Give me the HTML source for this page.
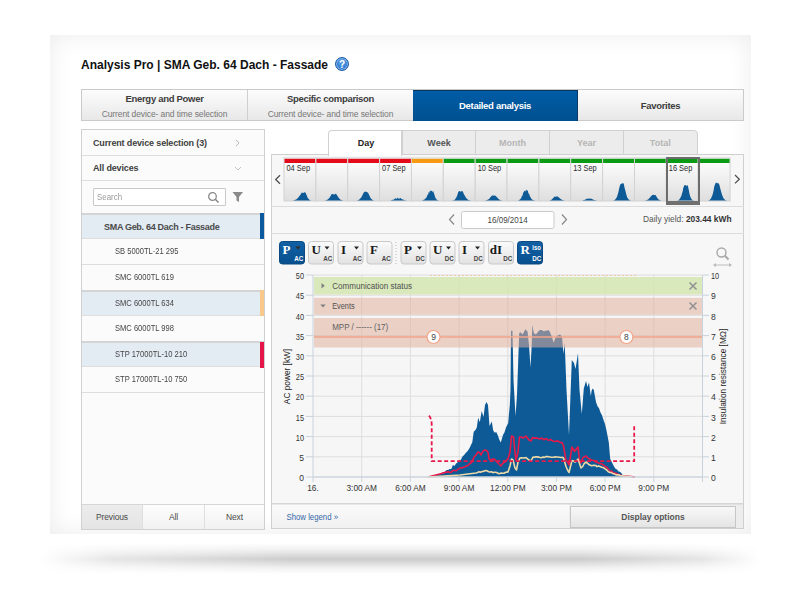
<!DOCTYPE html>
<html><head><meta charset="utf-8">
<style>
*{box-sizing:border-box;margin:0;padding:0}
html,body{width:800px;height:600px;overflow:hidden;background:#fff;font-family:"Liberation Sans",sans-serif;color:#444}
.a{position:absolute}
#shadow{left:40px;top:543px;width:720px;height:31px;background:linear-gradient(to bottom,rgba(0,0,0,0) 0%,rgba(0,0,0,0.06) 22%,rgba(0,0,0,0.2) 52%,rgba(0,0,0,0.06) 80%,rgba(0,0,0,0) 100%);-webkit-mask-image:linear-gradient(to right,transparent 0%,rgba(0,0,0,.5) 10%,#000 35%,#000 75%,rgba(0,0,0,.5) 92%,transparent 100%)}
#panel{left:50px;top:35px;width:701px;height:499px;background:#fff;box-shadow:inset 0 0 24px rgba(0,0,0,0.08)}
#title{left:81px;top:57px;font-size:12px;font-weight:bold;color:#111;white-space:nowrap}
#help{left:335px;top:57px;width:14px;height:14px;border-radius:50%;background:radial-gradient(circle at 50% 35%,#5aa0e8,#1e68c0);border:1px solid #1a5aa8;color:#fff;font-size:10px;font-weight:bold;text-align:center;line-height:14px;box-shadow:inset 0 0 0 1px rgba(190,220,255,0.6)}
#tabs{left:81px;top:89px;width:663px;height:32px;border:1px solid #cacaca;background:linear-gradient(#fcfcfc,#e8e8e8)}
.tab{position:absolute;top:0;height:30px;text-align:center;white-space:nowrap}
.tab b{display:block;font-size:9.5px;color:#3c3c3c;margin-top:3px;letter-spacing:-0.3px}
.tab span{display:block;font-size:8.5px;color:#777;margin-top:5px;letter-spacing:-0.1px}
.tab.sel{background:linear-gradient(#005ca6,#00508f)}
.tab.sel b{color:#fff;margin-top:9.5px}
#left{left:81px;top:129px;width:184px;height:401px;border:1px solid #d0d0d0;background:#fbfbfb}
.row{position:absolute;left:0;width:182px;border-bottom:1px solid #dedede;white-space:nowrap}
#right{left:271px;top:154px;width:473px;height:375px;border:1px solid #cfcfcf;background:#f7f7f7}
.lt{position:absolute;white-space:nowrap;color:#404040}
.chev{position:absolute;font-size:12px;color:#c4c4c4}
.dv{position:absolute;left:33px;top:7px;font-size:9px;color:#454545;white-space:nowrap;transform:scaleX(0.84);transform-origin:0 0}
.bar{position:absolute;right:0;top:0;width:4px;height:100%;display:block}
.btn{top:0;height:24px;line-height:24px;text-align:center;font-size:8.5px;color:#4a4a4a;letter-spacing:-0.15px}
.ptab{top:130px;height:25px;border:1px solid #d0d0d0;background:#ececec;text-align:center;font-size:9px;font-weight:bold;line-height:24px}
</style></head><body>
<div id="shadow" class="a"></div>
<div id="panel" class="a"></div>
<div id="title" class="a" style="top:58px">Analysis Pro | SMA Geb. 64 Dach - Fassade</div>
<div id="help" class="a">?</div>

<div id="tabs" class="a">
  <div class="tab" style="left:0;width:166px;border-right:1px solid #cfcfcf"><b>Energy and Power</b><span>Current device- and time selection</span></div>
  <div class="tab" style="left:166px;width:166px;border-right:1px solid #cfcfcf"><b>Specific comparison</b><span>Current device- and time selection</span></div>
  <div class="tab sel" style="left:331px;width:165px;top:-0.5px;height:31px;border-top:1px solid #08335e;border-right:1px solid #0a3a68"><b>Detailed analysis</b></div>
  <div class="tab" style="left:496px;width:165px"><b style="margin-top:10px">Favorites</b></div>
</div>

<div id="left" class="a">
  <div class="row" style="top:0;height:26px"><b class="lt" style="left:11px;top:8px;font-size:9px;letter-spacing:-0.15px">Current device selection (3)</b><svg class="a" style="left:153px;top:9px" width="5" height="8"><path d="M1 0.8 L4 4 L1 7.2" fill="none" stroke="#b8b8b8" stroke-width="1"/></svg></div>
  <div class="row" style="top:25px;height:26px"><b class="lt" style="left:11px;top:8px;font-size:9px;letter-spacing:-0.15px">All devices</b><svg class="a" style="left:152px;top:11px" width="8" height="5"><path d="M1 1 L4 4 L7 1" fill="none" stroke="#c4c4c4" stroke-width="1"/></svg></div>
  <div class="row" style="top:51px;height:33px;border-bottom:none"></div>
  <div class="a" style="left:11px;top:58px;width:133px;height:18px;border:1px solid #c8c8c8;background:#fff;border-radius:1px"><span class="lt" style="left:3px;top:3px;font-size:9px;color:#9a9a9a;transform:scaleX(0.88);transform-origin:0 0">Search</span>
    <svg class="a" style="left:113px;top:2px" width="13" height="13"><circle cx="5.5" cy="5.5" r="3.8" fill="none" stroke="#888" stroke-width="1.3"/><path d="M8.3 8.3 L11.5 11.5" stroke="#888" stroke-width="1.6"/></svg></div>
  <svg class="a" style="left:150px;top:61px" width="12" height="12"><path d="M0.5 1 L11 1 L7 6 L7 11 L4.5 9.5 L4.5 6 Z" fill="#8a8a8a"/></svg>
  <div class="row sel" style="top:83px;height:26px;border-top:2px solid #d4d4d4;background:#e3ebf3"><b class="lt" style="left:22px;top:7px;font-size:9px;letter-spacing:-0.3px;color:#4a4a4a">SMA Geb. 64 Dach - Fassade</b><i class="bar" style="background:#0b5aa0;top:-2px;height:26px"></i></div>
  <div class="row" style="top:109px;height:26px"><span class="dv">SB 5000TL-21 295</span></div>
  <div class="row" style="top:135px;height:26px"><span class="dv">SMC 6000TL 619</span></div>
  <div class="row sel" style="top:160px;height:26px;border-top:2px solid #d4d4d4;background:#e3ebf3"><span class="dv" style="top:6px">SMC 6000TL 634</span><i class="bar" style="background:#f9c98c;top:-2px;height:26px"></i></div>
  <div class="row" style="top:186px;height:26px"><span class="dv">SMC 6000TL 998</span></div>
  <div class="row sel" style="top:211px;height:26px;border-top:2px solid #d4d4d4;background:#e3ebf3"><span class="dv" style="top:6px">STP 17000TL-10 210</span><i class="bar" style="background:#e5174a;top:-1px;height:26px"></i></div>
  <div class="row" style="top:237px;height:26px"><span class="dv">STP 17000TL-10 750</span></div>
  <div class="a" style="left:0;top:374px;width:182px;height:25px;border-top:1px solid #d6d6d6;background:#f9f9f9">
    <div class="a btn" style="left:0;width:60px;background:linear-gradient(#ececec,#e4e4e4)">Previous</div>
    <div class="a btn" style="left:60px;width:62px;border-left:1px solid #dedede;background:linear-gradient(#fdfdfd,#f1f1f1)">All</div>
    <div class="a btn" style="left:122px;width:60px;border-left:1px solid #dedede;background:linear-gradient(#fdfdfd,#f1f1f1)">Next</div>
  </div>
</div>
<div id="right" class="a"></div>
<div class="a ptab" style="left:328px;width:74px;background:#fff;border-radius:4px 0 0 0;color:#222;border-bottom:none;height:26px;padding-left:2px">Day</div>
<div class="a ptab" style="left:402px;width:74px;color:#555">Week</div>
<div class="a ptab" style="left:475px;width:75px;color:#b5b5b5">Month</div>
<div class="a ptab" style="left:549px;width:75px;color:#b5b5b5">Year</div>
<div class="a ptab" style="left:623px;width:74.5px;color:#b5b5b5;border-radius:0 4px 0 0">Total</div>


<svg class="a" style="left:0;top:0" width="800" height="600" viewBox="0 0 800 600">
<defs><linearGradient id="cg" x1="0" y1="0" x2="0" y2="1"><stop offset="0" stop-color="#ffffff"/><stop offset="1" stop-color="#dedede"/></linearGradient></defs>
<rect x="284.0" y="158" width="31.9" height="43" fill="url(#cg)" stroke="#d2d2d2" stroke-width="1"/>
<rect x="284.5" y="158.8" width="30.9" height="4.2" fill="#e30a1a"/>
<rect x="315.9" y="158" width="31.9" height="43" fill="url(#cg)" stroke="#d2d2d2" stroke-width="1"/>
<rect x="316.4" y="158.8" width="30.9" height="4.2" fill="#e30a1a"/>
<rect x="347.7" y="158" width="31.9" height="43" fill="url(#cg)" stroke="#d2d2d2" stroke-width="1"/>
<rect x="348.2" y="158.8" width="30.9" height="4.2" fill="#e30a1a"/>
<rect x="379.6" y="158" width="31.9" height="43" fill="url(#cg)" stroke="#d2d2d2" stroke-width="1"/>
<rect x="380.1" y="158.8" width="30.9" height="4.2" fill="#e30a1a"/>
<rect x="411.4" y="158" width="31.9" height="43" fill="url(#cg)" stroke="#d2d2d2" stroke-width="1"/>
<rect x="411.9" y="158.8" width="30.9" height="4.2" fill="#f59a12"/>
<rect x="443.3" y="158" width="31.9" height="43" fill="url(#cg)" stroke="#d2d2d2" stroke-width="1"/>
<rect x="443.8" y="158.8" width="30.9" height="4.2" fill="#0a9a14"/>
<rect x="475.2" y="158" width="31.9" height="43" fill="url(#cg)" stroke="#d2d2d2" stroke-width="1"/>
<rect x="475.7" y="158.8" width="30.9" height="4.2" fill="#0a9a14"/>
<rect x="507.0" y="158" width="31.9" height="43" fill="url(#cg)" stroke="#d2d2d2" stroke-width="1"/>
<rect x="507.5" y="158.8" width="30.9" height="4.2" fill="#0a9a14"/>
<rect x="538.9" y="158" width="31.9" height="43" fill="url(#cg)" stroke="#d2d2d2" stroke-width="1"/>
<rect x="539.4" y="158.8" width="30.9" height="4.2" fill="#0a9a14"/>
<rect x="570.7" y="158" width="31.9" height="43" fill="url(#cg)" stroke="#d2d2d2" stroke-width="1"/>
<rect x="571.2" y="158.8" width="30.9" height="4.2" fill="#0a9a14"/>
<rect x="602.6" y="158" width="31.9" height="43" fill="url(#cg)" stroke="#d2d2d2" stroke-width="1"/>
<rect x="603.1" y="158.8" width="30.9" height="4.2" fill="#0a9a14"/>
<rect x="634.5" y="158" width="31.9" height="43" fill="url(#cg)" stroke="#d2d2d2" stroke-width="1"/>
<rect x="635.0" y="158.8" width="30.9" height="4.2" fill="#0a9a14"/>
<rect x="666.3" y="158" width="31.9" height="43" fill="url(#cg)" stroke="#d2d2d2" stroke-width="1"/>
<rect x="666.8" y="158.8" width="30.9" height="4.2" fill="#0a9a14"/>
<rect x="698.2" y="158" width="31.9" height="43" fill="url(#cg)" stroke="#d2d2d2" stroke-width="1"/>
<rect x="698.7" y="158.8" width="30.9" height="4.2" fill="#0a9a14"/>
<path d="M292.0,200.5 L293.0,200.4 L293.7,200.3 L294.4,200.1 L295.1,199.9 L295.8,199.6 L296.5,199.2 L297.2,198.7 L297.8,198.0 L298.5,197.3 L299.2,196.2 L299.9,195.5 L300.6,194.4 L301.3,193.2 L302.0,192.3 L302.7,193.0 L303.4,192.9 L304.1,192.5 L304.8,192.2 L305.5,192.5 L306.2,194.2 L306.8,195.5 L307.5,197.4 L308.2,198.4 L308.9,199.3 L309.6,199.9 L310.3,200.2 L311.0,200.4 L312.0,200.5 Z" fill="#0d5a96"/>
<text x="286.5" y="171" font-size="8.3" fill="#2a2a2a" font-family="Liberation Sans" textLength="23.5" lengthAdjust="spacingAndGlyphs">04 Sep</text>
<path d="M324.0,200.5 L325.0,200.4 L325.7,200.3 L326.4,200.1 L327.1,199.8 L327.8,199.4 L328.5,198.8 L329.2,198.2 L329.8,197.3 L330.5,196.2 L331.2,194.8 L331.9,194.0 L332.6,194.1 L333.3,194.2 L334.0,194.5 L334.7,194.4 L335.4,193.7 L336.1,193.8 L336.8,195.1 L337.5,196.0 L338.2,197.1 L338.8,197.9 L339.5,198.8 L340.2,199.4 L340.9,199.8 L341.6,200.1 L342.3,200.3 L343.0,200.4 L344.0,200.5 Z" fill="#0d5a96"/>
<path d="M356.0,200.5 L357.0,200.4 L357.7,200.2 L358.3,200.1 L359.0,199.7 L359.6,199.2 L360.3,198.6 L360.9,197.7 L361.6,196.9 L362.2,195.5 L362.9,194.3 L363.5,193.0 L364.2,192.0 L364.8,191.7 L365.5,191.5 L366.2,192.0 L366.8,191.8 L367.5,192.4 L368.1,192.7 L368.8,194.2 L369.4,195.5 L370.1,196.9 L370.7,198.2 L371.4,199.0 L372.0,199.5 L372.7,200.0 L373.3,200.2 L374.0,200.4 L375.0,200.5 Z" fill="#0d5a96"/>
<path d="M388.0,200.5 L389.0,200.5 L389.7,200.4 L390.5,200.4 L391.2,200.3 L391.9,200.1 L392.7,199.8 L393.4,199.8 L394.1,199.6 L394.8,198.5 L395.6,198.3 L396.3,199.0 L397.0,198.4 L397.8,197.5 L398.5,198.5 L399.2,199.0 L400.0,198.1 L400.7,197.9 L401.4,199.1 L402.2,199.6 L402.9,199.3 L403.6,199.7 L404.3,200.2 L405.1,200.2 L405.8,200.2 L406.5,200.4 L407.3,200.5 L408.0,200.5 L409.0,200.5 Z" fill="#0d5a96"/>
<text x="382.1" y="171" font-size="8.3" fill="#2a2a2a" font-family="Liberation Sans" textLength="23.5" lengthAdjust="spacingAndGlyphs">07 Sep</text>
<path d="M421.0,200.5 L422.0,200.4 L422.6,200.2 L423.2,200.0 L423.8,199.8 L424.5,199.4 L425.1,199.1 L425.7,198.1 L426.3,197.9 L426.9,196.2 L427.5,195.1 L428.2,194.2 L428.8,192.1 L429.4,192.8 L430.0,190.3 L430.6,191.3 L431.2,190.7 L431.8,190.7 L432.5,192.3 L433.1,190.4 L433.7,192.8 L434.3,194.2 L434.9,196.3 L435.5,198.1 L436.2,198.9 L436.8,199.8 L437.4,200.1 L438.0,200.3 L439.0,200.5 Z" fill="#0d5a96"/>
<path d="M452.0,200.5 L453.0,200.3 L453.7,200.2 L454.3,199.9 L455.0,199.4 L455.6,198.6 L456.3,197.6 L456.9,196.3 L457.6,194.2 L458.2,192.3 L458.9,191.2 L459.5,191.0 L460.2,191.5 L460.8,191.5 L461.5,191.2 L462.2,191.3 L462.8,191.3 L463.5,193.2 L464.1,194.7 L464.8,195.4 L465.4,196.8 L466.1,197.9 L466.7,198.6 L467.4,199.3 L468.0,199.7 L468.7,200.0 L469.3,200.2 L470.0,200.3 L471.0,200.5 Z" fill="#0d5a96"/>
<path d="M484.0,200.5 L485.0,200.4 L485.7,200.3 L486.3,200.2 L487.0,200.0 L487.6,199.8 L488.3,199.4 L488.9,199.0 L489.6,198.4 L490.2,197.6 L490.9,196.7 L491.5,196.0 L492.2,195.4 L492.8,195.4 L493.5,195.5 L494.2,195.8 L494.8,195.6 L495.5,195.7 L496.1,196.4 L496.8,197.1 L497.4,197.8 L498.1,198.6 L498.7,199.1 L499.4,199.6 L500.0,200.0 L500.7,200.2 L501.3,200.3 L502.0,200.4 L503.0,200.5 Z" fill="#0d5a96"/>
<text x="477.7" y="171" font-size="8.3" fill="#2a2a2a" font-family="Liberation Sans" textLength="23.5" lengthAdjust="spacingAndGlyphs">10 Sep</text>
<path d="M517.0,200.5 L518.0,200.4 L518.6,200.2 L519.2,200.0 L519.8,199.6 L520.5,198.9 L521.1,198.3 L521.7,196.6 L522.3,195.9 L522.9,194.0 L523.5,192.3 L524.2,191.3 L524.8,190.5 L525.4,191.7 L526.0,189.6 L526.6,190.5 L527.2,190.5 L527.8,190.6 L528.5,193.8 L529.1,193.5 L529.7,196.0 L530.3,196.8 L530.9,197.9 L531.5,199.1 L532.2,199.5 L532.8,199.9 L533.4,200.1 L534.0,200.3 L535.0,200.5 Z" fill="#0d5a96"/>
<path d="M548.0,200.5 L549.0,200.4 L549.6,200.4 L550.2,200.2 L550.8,200.0 L551.5,199.7 L552.1,199.2 L552.7,198.6 L553.3,197.9 L553.9,197.3 L554.5,196.6 L555.2,196.8 L555.8,196.8 L556.4,196.4 L557.0,196.5 L557.6,196.6 L558.2,196.7 L558.8,197.4 L559.5,197.9 L560.1,198.4 L560.7,199.1 L561.3,199.4 L561.9,199.8 L562.5,200.0 L563.2,200.2 L563.8,200.3 L564.4,200.4 L565.0,200.4 L566.0,200.5 Z" fill="#0d5a96"/>
<path d="M580.0,200.5 L581.0,200.5 L581.7,200.4 L582.3,200.4 L583.0,200.3 L583.6,200.1 L584.3,200.0 L584.9,199.7 L585.6,199.4 L586.2,199.1 L586.9,198.8 L587.5,198.7 L588.2,198.6 L588.8,198.7 L589.5,198.7 L590.2,198.5 L590.8,198.7 L591.5,198.8 L592.1,199.1 L592.8,199.4 L593.4,199.7 L594.1,199.9 L594.7,200.1 L595.4,200.2 L596.0,200.3 L596.7,200.4 L597.3,200.4 L598.0,200.5 L599.0,200.5 Z" fill="#0d5a96"/>
<text x="573.2" y="171" font-size="8.3" fill="#2a2a2a" font-family="Liberation Sans" textLength="23.5" lengthAdjust="spacingAndGlyphs">13 Sep</text>
<path d="M613.0,200.5 L614.0,200.2 L614.6,199.9 L615.2,199.5 L615.8,198.8 L616.5,197.7 L617.1,196.5 L617.7,194.6 L618.3,192.4 L618.9,189.8 L619.5,186.9 L620.2,184.8 L620.8,183.9 L621.4,184.0 L622.0,183.1 L622.6,183.6 L623.2,183.3 L623.8,183.8 L624.5,187.6 L625.1,189.8 L625.7,192.0 L626.3,194.4 L626.9,196.6 L627.5,198.0 L628.2,198.9 L628.8,199.6 L629.4,200.0 L630.0,200.2 L631.0,200.5 Z" fill="#0d5a96"/>
<path d="M644.0,200.5 L645.0,200.4 L645.6,200.3 L646.2,200.2 L646.8,200.1 L647.5,199.8 L648.1,199.4 L648.7,199.0 L649.3,198.3 L649.9,197.6 L650.5,197.1 L651.2,195.9 L651.8,195.5 L652.4,195.0 L653.0,194.7 L653.6,194.8 L654.2,195.2 L654.8,195.0 L655.5,195.0 L656.1,196.0 L656.7,197.1 L657.3,198.0 L657.9,198.7 L658.5,199.4 L659.2,199.8 L659.8,200.1 L660.4,200.3 L661.0,200.4 L662.0,200.5 Z" fill="#0d5a96"/>
<path d="M677.0,200.5 L678.0,200.2 L678.6,200.0 L679.2,199.6 L679.7,198.9 L680.3,198.1 L680.9,196.7 L681.5,195.6 L682.0,193.6 L682.6,191.7 L683.2,188.3 L683.8,186.7 L684.3,185.2 L684.9,185.3 L685.5,185.0 L686.1,185.4 L686.7,186.0 L687.2,185.6 L687.8,185.2 L688.4,188.3 L689.0,191.0 L689.5,194.1 L690.1,196.1 L690.7,197.4 L691.3,198.7 L691.8,199.5 L692.4,199.9 L693.0,200.2 L694.0,200.5 Z" fill="#0d5a96"/>
<text x="668.8" y="171" font-size="8.3" fill="#2a2a2a" font-family="Liberation Sans" textLength="23.5" lengthAdjust="spacingAndGlyphs">16 Sep</text>
<path d="M708.0,200.5 L709.0,200.2 L709.7,199.9 L710.3,199.3 L711.0,198.6 L711.6,197.1 L712.3,195.6 L712.9,193.4 L713.6,190.4 L714.2,186.8 L714.9,184.8 L715.5,183.3 L716.2,182.4 L716.8,183.1 L717.5,183.3 L718.2,183.2 L718.8,183.5 L719.5,185.3 L720.1,187.7 L720.8,190.4 L721.4,192.4 L722.1,195.0 L722.7,196.6 L723.4,198.0 L724.0,198.9 L724.7,199.6 L725.3,199.9 L726.0,200.2 L727.0,200.5 Z" fill="#0d5a96"/>
<rect x="667" y="158" width="32" height="46" fill="none" stroke="#6c6c6c" stroke-width="2"/>
<rect x="667" y="201" width="32" height="4" fill="#707070"/>
<path d="M280,175.3 L275.7,179.5 L280,183.7" fill="none" stroke="#505050" stroke-width="1.3"/>
<path d="M735,175 L739.3,179.2 L735,183.4" fill="none" stroke="#505050" stroke-width="1.3"/>
<line x1="271" y1="206.5" x2="744" y2="206.5" stroke="#dcdcdc"/>
<line x1="271" y1="233.5" x2="744" y2="233.5" stroke="#dcdcdc"/>
<path d="M454,214.5 L449.5,219.5 L454,224.5" fill="none" stroke="#888" stroke-width="1.2"/>
<path d="M562,214.5 L566.5,219.5 L562,224.5" fill="none" stroke="#888" stroke-width="1.2"/>
<rect x="461.5" y="211.5" width="92.5" height="17" rx="2" fill="#fff" stroke="#cbcbcb"/>
<text x="487.6" y="223.3" font-size="8.8" fill="#444" textLength="40" lengthAdjust="spacingAndGlyphs" font-family="Liberation Sans">16/09/2014</text>
<text x="731.5" y="222" font-size="8.4" fill="#555" text-anchor="end" font-family="Liberation Sans">Daily yield: <tspan font-weight="bold" fill="#333">203.44 kWh</tspan></text>
</svg>
<svg class="a" style="left:0;top:0" width="800" height="600" viewBox="0 0 800 600">
<defs><linearGradient id="bg1" x1="0" y1="0" x2="0" y2="1"><stop offset="0" stop-color="#fbfbfb"/><stop offset="1" stop-color="#e2e2e2"/></linearGradient><linearGradient id="bg2" x1="0" y1="0" x2="0" y2="1"><stop offset="0" stop-color="#1060a4"/><stop offset="1" stop-color="#08508f"/></linearGradient></defs>
<rect x="279.5" y="241.5" width="25" height="22.5" rx="3" fill="url(#bg2)" stroke="#0a4a80"/>
<text x="282.5" y="254" font-size="13" font-weight="bold" fill="#fff" font-family="Liberation Serif">P</text>
<path d="M295.5,246.5 L300.5,246.5 L298,249.5 Z" fill="#3a2a20"/>
<text x="303.2" y="261.2" font-size="6.6" font-weight="bold" fill="#fff" text-anchor="end" font-family="Liberation Sans" textLength="9" lengthAdjust="spacingAndGlyphs">AC</text>
<rect x="308.5" y="241.5" width="25" height="22.5" rx="3" fill="url(#bg1)" stroke="#c9c9c9"/>
<text x="311.5" y="254" font-size="13" font-weight="bold" fill="#1a1a1a" font-family="Liberation Serif">U</text>
<path d="M324.5,246.5 L329.5,246.5 L327,249.5 Z" fill="#222"/>
<text x="332.2" y="261.2" font-size="6.6" font-weight="bold" fill="#444" text-anchor="end" font-family="Liberation Sans" textLength="9" lengthAdjust="spacingAndGlyphs">AC</text>
<rect x="338.0" y="241.5" width="25" height="22.5" rx="3" fill="url(#bg1)" stroke="#c9c9c9"/>
<text x="341.0" y="254" font-size="13" font-weight="bold" fill="#1a1a1a" font-family="Liberation Serif">I</text>
<path d="M354.0,246.5 L359.0,246.5 L356.5,249.5 Z" fill="#222"/>
<text x="361.7" y="261.2" font-size="6.6" font-weight="bold" fill="#444" text-anchor="end" font-family="Liberation Sans" textLength="9" lengthAdjust="spacingAndGlyphs">AC</text>
<rect x="367.0" y="241.5" width="25" height="22.5" rx="3" fill="url(#bg1)" stroke="#c9c9c9"/>
<text x="370.0" y="254" font-size="13" font-weight="bold" fill="#1a1a1a" font-family="Liberation Serif">F</text>
<text x="390.7" y="261.2" font-size="6.6" font-weight="bold" fill="#444" text-anchor="end" font-family="Liberation Sans" textLength="9" lengthAdjust="spacingAndGlyphs">AC</text>
<rect x="401.0" y="241.5" width="25" height="22.5" rx="3" fill="url(#bg1)" stroke="#c9c9c9"/>
<text x="404.0" y="254" font-size="13" font-weight="bold" fill="#1a1a1a" font-family="Liberation Serif">P</text>
<path d="M417.0,246.5 L422.0,246.5 L419.5,249.5 Z" fill="#222"/>
<text x="424.7" y="261.2" font-size="6.6" font-weight="bold" fill="#444" text-anchor="end" font-family="Liberation Sans" textLength="9" lengthAdjust="spacingAndGlyphs">DC</text>
<rect x="430.0" y="241.5" width="25" height="22.5" rx="3" fill="url(#bg1)" stroke="#c9c9c9"/>
<text x="433.0" y="254" font-size="13" font-weight="bold" fill="#1a1a1a" font-family="Liberation Serif">U</text>
<path d="M446.0,246.5 L451.0,246.5 L448.5,249.5 Z" fill="#222"/>
<text x="453.7" y="261.2" font-size="6.6" font-weight="bold" fill="#444" text-anchor="end" font-family="Liberation Sans" textLength="9" lengthAdjust="spacingAndGlyphs">DC</text>
<rect x="459.0" y="241.5" width="25" height="22.5" rx="3" fill="url(#bg1)" stroke="#c9c9c9"/>
<text x="462.0" y="254" font-size="13" font-weight="bold" fill="#1a1a1a" font-family="Liberation Serif">I</text>
<path d="M475.0,246.5 L480.0,246.5 L477.5,249.5 Z" fill="#222"/>
<text x="482.7" y="261.2" font-size="6.6" font-weight="bold" fill="#444" text-anchor="end" font-family="Liberation Sans" textLength="9" lengthAdjust="spacingAndGlyphs">DC</text>
<rect x="488.5" y="241.5" width="25" height="22.5" rx="3" fill="url(#bg1)" stroke="#c9c9c9"/>
<text x="489.8" y="254" font-size="13" font-weight="bold" fill="#1a1a1a" font-family="Liberation Serif">dI</text>
<text x="512.2" y="261.2" font-size="6.6" font-weight="bold" fill="#444" text-anchor="end" font-family="Liberation Sans" textLength="9" lengthAdjust="spacingAndGlyphs">DC</text>
<rect x="517.5" y="241.5" width="25" height="22.5" rx="3" fill="url(#bg2)" stroke="#0a4a80"/>
<text x="520.5" y="254" font-size="13" font-weight="bold" fill="#fff" font-family="Liberation Serif">R</text>
<text x="541.2" y="261.2" font-size="6.6" font-weight="bold" fill="#fff" text-anchor="end" font-family="Liberation Sans" textLength="9" lengthAdjust="spacingAndGlyphs">DC</text>
<text x="540.8" y="249.8" font-size="7.2" font-weight="bold" fill="#fff" text-anchor="end" font-family="Liberation Sans" textLength="8.5" lengthAdjust="spacingAndGlyphs">iso</text>
<line x1="396" y1="242" x2="396" y2="264" stroke="#bbb" stroke-dasharray="1,2"/>
<circle cx="721.5" cy="252.5" r="4.5" fill="none" stroke="#aaa" stroke-width="1.4"/>
<path d="M724.8,255.8 L728.5,259.5" stroke="#aaa" stroke-width="2"/>
<path d="M714,265 L731,265" stroke="#bbb" stroke-width="1"/><path d="M713,265 L716,263 L716,267 Z M732,265 L729,263 L729,267 Z" fill="#bbb"/>
</svg>
<svg class="a" style="left:0;top:0" width="800" height="600" viewBox="0 0 800 600">
<rect x="313.0" y="275.0" width="389.5" height="202.0" fill="#f6f6f6"/>
<line x1="313.0" y1="456.8" x2="702.5" y2="456.8" stroke="#dedede" stroke-width="1"/>
<line x1="313.0" y1="436.6" x2="702.5" y2="436.6" stroke="#dedede" stroke-width="1"/>
<line x1="313.0" y1="416.4" x2="702.5" y2="416.4" stroke="#dedede" stroke-width="1"/>
<line x1="313.0" y1="396.2" x2="702.5" y2="396.2" stroke="#dedede" stroke-width="1"/>
<line x1="313.0" y1="376.0" x2="702.5" y2="376.0" stroke="#dedede" stroke-width="1"/>
<line x1="313.0" y1="355.8" x2="702.5" y2="355.8" stroke="#dedede" stroke-width="1"/>
<line x1="313.0" y1="335.6" x2="702.5" y2="335.6" stroke="#dedede" stroke-width="1"/>
<line x1="313.0" y1="315.4" x2="702.5" y2="315.4" stroke="#dedede" stroke-width="1"/>
<line x1="313.0" y1="295.2" x2="702.5" y2="295.2" stroke="#dedede" stroke-width="1"/>
<line x1="313.0" y1="275.0" x2="702.5" y2="275.0" stroke="#dedede" stroke-width="1"/>
<line x1="361.7" y1="275.0" x2="361.7" y2="477.0" stroke="#dedede" stroke-width="1"/>
<line x1="410.4" y1="275.0" x2="410.4" y2="477.0" stroke="#dedede" stroke-width="1"/>
<line x1="459.1" y1="275.0" x2="459.1" y2="477.0" stroke="#dedede" stroke-width="1"/>
<line x1="507.8" y1="275.0" x2="507.8" y2="477.0" stroke="#dedede" stroke-width="1"/>
<line x1="556.4" y1="275.0" x2="556.4" y2="477.0" stroke="#dedede" stroke-width="1"/>
<line x1="605.1" y1="275.0" x2="605.1" y2="477.0" stroke="#dedede" stroke-width="1"/>
<line x1="653.8" y1="275.0" x2="653.8" y2="477.0" stroke="#dedede" stroke-width="1"/>
<line x1="430" y1="275.5" x2="636" y2="275.5" stroke="#f0c8a8" stroke-dasharray="2,2"/>
<path d="M428.3,477.0 L441.7,473.7 L443.3,473.5 L444.9,472.0 L446.5,469.9 L448.1,469.9 L449.7,469.0 L451.3,469.1 L452.9,465.1 L454.5,466.0 L456.1,463.4 L457.7,462.3 L459.3,460.4 L460.9,459.7 L462.5,456.4 L464.1,454.9 L465.7,453.0 L467.7,451.0 L469.7,447.7 L472.3,442.3 L473.7,431.7 L475.5,430.0 L476.8,427.5 L478.2,417.8 L479.8,422.2 L481.7,411.0 L483.5,417.0 L485.0,405.0 L486.5,402.0 L488.0,405.0 L489.5,426.0 L491.8,421.5 L493.2,430.5 L494.8,432.8 L496.2,432.0 L497.8,435.2 L499.2,439.5 L500.8,442.5 L503.0,435.0 L504.5,432.3 L506.0,427.5 L508.2,423.0 L509.8,405.0 L510.5,390.0 L511.0,330.8 L512.5,330.8 L513.5,380.0 L515.5,416.0 L517.0,395.0 L519.2,333.0 L520.8,332.2 L522.2,334.5 L523.8,332.5 L525.2,329.2 L527.5,331.5 L529.0,345.0 L530.5,367.5 L531.7,345.0 L532.3,324.8 L533.8,333.0 L535.8,334.5 L537.2,333.1 L538.8,330.8 L540.2,330.1 L541.8,330.0 L544.0,331.5 L545.5,330.6 L547.0,330.8 L548.5,330.1 L550.0,332.2 L551.5,336.0 L553.8,342.8 L555.2,338.2 L556.8,336.0 L558.2,335.2 L560.1,334.6 L562.0,336.8 L563.5,354.0 L564.7,342.8 L566.5,390.0 L569.0,435.0 L571.8,360.0 L574.0,363.0 L575.5,369.0 L578.0,353.2 L579.5,390.0 L581.8,414.0 L583.8,388.5 L586.0,381.0 L587.5,387.0 L589.0,382.5 L590.8,396.0 L591.8,390.0 L592.8,388.5 L593.8,390.0 L596.0,402.0 L597.5,406.3 L599.0,408.2 L600.5,412.5 L602.0,415.2 L603.5,420.0 L605.0,423.9 L606.5,430.5 L608.8,442.5 L610.2,459.0 L612.5,463.5 L614.0,466.6 L615.5,468.7 L617.0,469.5 L618.5,471.5 L620.0,471.8 L621.5,473.2 L623.0,475.5 L635.0,477.0 Z" fill="#0d5a96"/>
<path d="M428.0,477.0 L441.7,473.5 L443.0,472.8 L444.4,472.8 L445.7,472.0 L447.0,472.2 L448.4,471.6 L449.7,472.5 L451.0,472.3 L452.3,471.2 L453.7,470.3 L455.0,470.5 L456.4,470.8 L457.8,469.2 L459.2,468.7 L460.6,467.6 L462.0,468.0 L463.5,467.2 L465.0,466.7 L466.5,466.1 L468.0,465.5 L469.3,463.8 L470.7,463.2 L472.0,462.0 L474.0,457.0 L476.0,455.0 L478.0,452.0 L479.5,452.6 L481.0,455.0 L483.0,451.0 L485.0,450.0 L486.5,450.6 L488.0,452.0 L489.0,459.0 L491.0,460.0 L493.0,459.0 L494.5,459.3 L496.0,461.0 L497.5,462.3 L499.0,464.0 L501.0,466.0 L502.3,463.8 L503.7,462.5 L505.0,462.0 L506.5,460.1 L508.0,459.0 L510.0,452.0 L511.5,436.0 L513.5,437.0 L515.0,452.0 L516.0,460.0 L518.0,452.0 L519.5,437.0 L521.2,437.0 L523.0,438.0 L524.5,437.2 L526.0,436.0 L527.5,438.1 L529.0,440.0 L531.0,441.0 L532.5,437.5 L534.0,438.1 L535.5,438.1 L537.0,438.0 L538.3,438.6 L539.7,439.0 L541.0,438.3 L542.3,438.4 L543.7,439.7 L545.0,439.0 L546.4,438.7 L547.8,440.0 L549.2,440.2 L550.6,439.4 L552.0,440.5 L553.5,441.2 L555.0,441.5 L556.5,441.1 L558.0,441.0 L559.3,441.9 L560.7,442.6 L562.0,442.5 L563.5,446.0 L566.0,460.5 L567.5,462.1 L569.0,465.0 L572.0,447.0 L574.5,451.5 L576.2,449.3 L578.0,447.0 L579.5,460.5 L581.0,462.8 L583.0,457.5 L584.5,456.8 L586.0,456.0 L587.3,457.6 L588.7,458.5 L590.0,459.0 L591.3,460.1 L592.7,460.2 L594.0,460.5 L595.5,462.0 L597.0,462.3 L598.5,463.1 L600.0,463.5 L601.7,464.0 L603.3,464.7 L605.0,466.5 L606.7,467.3 L608.3,469.2 L610.0,471.0 L611.7,471.0 L613.3,472.9 L615.0,473.0 L616.4,473.6 L617.8,474.2 L619.2,474.7 L620.6,475.3 L622.0,475.5 L635.0,477.0" fill="none" stroke="#e8194a" stroke-width="1.6" stroke-linejoin="round"/>
<path d="M428.0,477.0 L460.0,475.0 L476.0,473.0 L477.5,472.6 L479.0,471.7 L480.5,472.2 L482.0,471.5 L483.3,471.5 L484.7,470.8 L486.0,470.5 L487.3,471.0 L488.7,471.7 L490.0,472.0 L491.4,471.7 L492.9,472.7 L494.3,472.3 L495.7,472.3 L497.1,472.8 L498.6,473.6 L500.0,473.5 L501.3,472.9 L502.7,473.3 L504.0,473.3 L505.3,472.5 L506.7,472.1 L508.0,472.0 L510.0,466.0 L511.5,459.0 L513.0,460.0 L515.0,468.0 L516.5,470.0 L518.0,462.0 L520.0,458.0 L521.5,457.8 L523.0,458.0 L524.5,457.9 L526.0,457.5 L527.5,458.9 L529.0,460.0 L531.0,461.0 L533.0,457.0 L534.4,457.3 L535.8,456.7 L537.2,456.9 L538.6,457.1 L540.0,457.5 L541.4,457.7 L542.9,457.1 L544.3,457.4 L545.7,456.6 L547.1,456.6 L548.6,456.8 L550.0,457.0 L551.3,457.2 L552.7,457.2 L554.0,457.2 L555.3,456.7 L556.7,457.0 L558.0,457.0 L559.4,457.2 L560.8,457.5 L562.1,457.3 L563.5,458.0 L566.0,466.5 L567.5,470.0 L569.0,472.5 L572.0,460.5 L573.5,460.9 L575.0,462.0 L576.5,461.1 L578.0,459.0 L581.0,468.0 L582.7,466.5 L584.3,463.4 L586.0,462.0 L587.3,463.0 L588.7,464.4 L590.0,465.0 L591.4,465.8 L592.9,465.4 L594.3,465.4 L595.7,465.5 L597.1,466.6 L598.6,465.9 L600.0,466.5 L601.7,467.3 L603.3,467.6 L605.0,468.8 L606.7,470.0 L608.3,471.8 L610.0,472.5 L611.4,472.5 L612.9,473.7 L614.3,473.8 L615.7,474.7 L617.1,474.9 L618.6,474.7 L620.0,475.5 L632.0,477.0" fill="none" stroke="#efd9a6" stroke-width="1.6" stroke-linejoin="round"/>
<path d="M429,415.7 C430.5,417.5 431.5,420 431.7,424 L431.7,461.2 L634.2,461.2 L634.2,423.7" fill="none" stroke="#e8194a" stroke-width="1.8" stroke-dasharray="4,2.5"/>
<rect x="314.0" y="277" width="388.5" height="17.5" fill="#d2e6ac" fill-opacity="0.8"/>
<rect x="314.0" y="297.8" width="388.5" height="17" fill="#e2b09e" fill-opacity="0.55"/>
<rect x="314.0" y="318" width="388.5" height="29.5" fill="#e2b09e" fill-opacity="0.55"/>
<line x1="314.0" y1="337" x2="702.5" y2="337" stroke="#f2a488" stroke-width="1.5"/>
<circle cx="433.5" cy="337" r="6.5" fill="#fff" stroke="#f2a488" stroke-width="1.2"/>
<text x="433.5" y="340" font-size="8.5" fill="#444" text-anchor="middle" font-family="Liberation Sans">9</text>
<circle cx="626.4" cy="337" r="6.5" fill="#fff" stroke="#f2a488" stroke-width="1.2"/>
<text x="626.4" y="340" font-size="8.5" fill="#444" text-anchor="middle" font-family="Liberation Sans">8</text>
<path d="M321.5,283 L324.8,285.8 L321.5,288.6 Z" fill="#808080"/>
<path d="M320.3,304.6 L325.7,304.6 L323,307.6 Z" fill="#808080"/>
<text x="332.2" y="289" font-size="8.5" fill="#505050" textLength="79.8" lengthAdjust="spacingAndGlyphs" font-family="Liberation Sans">Communication status</text>
<text x="332.2" y="309" font-size="8.5" fill="#505050" textLength="22.5" lengthAdjust="spacingAndGlyphs" font-family="Liberation Sans">Events</text>
<text x="332.2" y="329.5" font-size="8.5" fill="#606060" textLength="56" lengthAdjust="spacingAndGlyphs" font-family="Liberation Sans">MPP / ------ (17)</text>
<path d="M689.5,282.5 L696.5,289.5 M696.5,282.5 L689.5,289.5" stroke="#959595" stroke-width="1.7"/>
<path d="M689.5,302.5 L696.5,309.5 M696.5,302.5 L689.5,309.5" stroke="#959595" stroke-width="1.7"/>
<line x1="313.0" y1="275.0" x2="313.0" y2="482.0" stroke="#c6d2de" stroke-width="1"/>
<line x1="702.5" y1="275.0" x2="702.5" y2="482.0" stroke="#c6d2de" stroke-width="1"/>
<line x1="313.0" y1="477.0" x2="702.5" y2="477.0" stroke="#cdd5dd" stroke-width="1.5"/>
<line x1="361.7" y1="477.0" x2="361.7" y2="482.0" stroke="#cdd5dd" stroke-width="1"/>
<line x1="410.4" y1="477.0" x2="410.4" y2="482.0" stroke="#cdd5dd" stroke-width="1"/>
<line x1="459.1" y1="477.0" x2="459.1" y2="482.0" stroke="#cdd5dd" stroke-width="1"/>
<line x1="507.8" y1="477.0" x2="507.8" y2="482.0" stroke="#cdd5dd" stroke-width="1"/>
<line x1="556.4" y1="477.0" x2="556.4" y2="482.0" stroke="#cdd5dd" stroke-width="1"/>
<line x1="605.1" y1="477.0" x2="605.1" y2="482.0" stroke="#cdd5dd" stroke-width="1"/>
<line x1="653.8" y1="477.0" x2="653.8" y2="482.0" stroke="#cdd5dd" stroke-width="1"/>
<line x1="306" y1="477.0" x2="313.0" y2="477.0" stroke="#c8d2dc"/>
<text x="304" y="481.2" font-size="8.6" fill="#333" text-anchor="end" font-family="Liberation Sans">0</text>
<line x1="306" y1="456.8" x2="313.0" y2="456.8" stroke="#c8d2dc"/>
<text x="304" y="461.0" font-size="8.6" fill="#333" text-anchor="end" font-family="Liberation Sans">5</text>
<line x1="306" y1="436.6" x2="313.0" y2="436.6" stroke="#c8d2dc"/>
<text x="304" y="440.8" font-size="8.6" fill="#333" text-anchor="end" font-family="Liberation Sans" textLength="8.2" lengthAdjust="spacingAndGlyphs">10</text>
<line x1="306" y1="416.4" x2="313.0" y2="416.4" stroke="#c8d2dc"/>
<text x="304" y="420.6" font-size="8.6" fill="#333" text-anchor="end" font-family="Liberation Sans" textLength="8.2" lengthAdjust="spacingAndGlyphs">15</text>
<line x1="306" y1="396.2" x2="313.0" y2="396.2" stroke="#c8d2dc"/>
<text x="304" y="400.4" font-size="8.6" fill="#333" text-anchor="end" font-family="Liberation Sans" textLength="8.2" lengthAdjust="spacingAndGlyphs">20</text>
<line x1="306" y1="376.0" x2="313.0" y2="376.0" stroke="#c8d2dc"/>
<text x="304" y="380.2" font-size="8.6" fill="#333" text-anchor="end" font-family="Liberation Sans" textLength="8.2" lengthAdjust="spacingAndGlyphs">25</text>
<line x1="306" y1="355.8" x2="313.0" y2="355.8" stroke="#c8d2dc"/>
<text x="304" y="360.0" font-size="8.6" fill="#333" text-anchor="end" font-family="Liberation Sans" textLength="8.2" lengthAdjust="spacingAndGlyphs">30</text>
<line x1="306" y1="335.6" x2="313.0" y2="335.6" stroke="#c8d2dc"/>
<text x="304" y="339.8" font-size="8.6" fill="#333" text-anchor="end" font-family="Liberation Sans" textLength="8.2" lengthAdjust="spacingAndGlyphs">35</text>
<line x1="306" y1="315.4" x2="313.0" y2="315.4" stroke="#c8d2dc"/>
<text x="304" y="319.6" font-size="8.6" fill="#333" text-anchor="end" font-family="Liberation Sans" textLength="8.2" lengthAdjust="spacingAndGlyphs">40</text>
<line x1="306" y1="295.2" x2="313.0" y2="295.2" stroke="#c8d2dc"/>
<text x="304" y="299.4" font-size="8.6" fill="#333" text-anchor="end" font-family="Liberation Sans" textLength="8.2" lengthAdjust="spacingAndGlyphs">45</text>
<line x1="306" y1="275.0" x2="313.0" y2="275.0" stroke="#c8d2dc"/>
<text x="304" y="279.2" font-size="8.6" fill="#333" text-anchor="end" font-family="Liberation Sans" textLength="8.2" lengthAdjust="spacingAndGlyphs">50</text>
<line x1="702.5" y1="477.0" x2="709" y2="477.0" stroke="#c8d2dc"/>
<text x="711" y="481.2" font-size="8.6" fill="#333" font-family="Liberation Sans">0</text>
<line x1="702.5" y1="456.8" x2="709" y2="456.8" stroke="#c8d2dc"/>
<text x="711" y="461.0" font-size="8.6" fill="#333" font-family="Liberation Sans">1</text>
<line x1="702.5" y1="436.6" x2="709" y2="436.6" stroke="#c8d2dc"/>
<text x="711" y="440.8" font-size="8.6" fill="#333" font-family="Liberation Sans">2</text>
<line x1="702.5" y1="416.4" x2="709" y2="416.4" stroke="#c8d2dc"/>
<text x="711" y="420.6" font-size="8.6" fill="#333" font-family="Liberation Sans">3</text>
<line x1="702.5" y1="396.2" x2="709" y2="396.2" stroke="#c8d2dc"/>
<text x="711" y="400.4" font-size="8.6" fill="#333" font-family="Liberation Sans">4</text>
<line x1="702.5" y1="376.0" x2="709" y2="376.0" stroke="#c8d2dc"/>
<text x="711" y="380.2" font-size="8.6" fill="#333" font-family="Liberation Sans">5</text>
<line x1="702.5" y1="355.8" x2="709" y2="355.8" stroke="#c8d2dc"/>
<text x="711" y="360.0" font-size="8.6" fill="#333" font-family="Liberation Sans">6</text>
<line x1="702.5" y1="335.6" x2="709" y2="335.6" stroke="#c8d2dc"/>
<text x="711" y="339.8" font-size="8.6" fill="#333" font-family="Liberation Sans">7</text>
<line x1="702.5" y1="315.4" x2="709" y2="315.4" stroke="#c8d2dc"/>
<text x="711" y="319.6" font-size="8.6" fill="#333" font-family="Liberation Sans">8</text>
<line x1="702.5" y1="295.2" x2="709" y2="295.2" stroke="#c8d2dc"/>
<text x="711" y="299.4" font-size="8.6" fill="#333" font-family="Liberation Sans">9</text>
<line x1="702.5" y1="275.0" x2="709" y2="275.0" stroke="#c8d2dc"/>
<text x="711" y="279.2" font-size="8.6" fill="#333" font-family="Liberation Sans" textLength="8.2" lengthAdjust="spacingAndGlyphs">10</text>
<text transform="translate(289.5,376.5) rotate(-90)" font-size="8.3" fill="#222" text-anchor="middle" font-family="Liberation Sans">AC power [kW]</text>
<text transform="translate(726,376.5) rotate(-90)" font-size="8.3" fill="#222" text-anchor="middle" font-family="Liberation Sans">Insulation resistance [M&#937;]</text>
<text x="313.0" y="491" font-size="8.3" fill="#333" text-anchor="middle" font-family="Liberation Sans">16.</text>
<text x="361.7" y="491" font-size="8.3" fill="#333" text-anchor="middle" font-family="Liberation Sans">3:00 AM</text>
<text x="410.4" y="491" font-size="8.3" fill="#333" text-anchor="middle" font-family="Liberation Sans">6:00 AM</text>
<text x="459.1" y="491" font-size="8.3" fill="#333" text-anchor="middle" font-family="Liberation Sans">9:00 AM</text>
<text x="507.8" y="491" font-size="8.3" fill="#333" text-anchor="middle" font-family="Liberation Sans">12:00 PM</text>
<text x="556.4" y="491" font-size="8.3" fill="#333" text-anchor="middle" font-family="Liberation Sans">3:00 PM</text>
<text x="605.1" y="491" font-size="8.3" fill="#333" text-anchor="middle" font-family="Liberation Sans">6:00 PM</text>
<text x="653.8" y="491" font-size="8.3" fill="#333" text-anchor="middle" font-family="Liberation Sans">9:00 PM</text>
<defs><linearGradient id="fg" x1="0" y1="0" x2="0" y2="1"><stop offset="0" stop-color="#fbfbfb"/><stop offset="1" stop-color="#f0f0f0"/></linearGradient></defs>
<rect x="272" y="504" width="471" height="24" fill="url(#fg)"/>
<rect x="569" y="504" width="174" height="24" fill="#ededed"/>
<line x1="271" y1="503.8" x2="744" y2="503.8" stroke="#d6d6d6" stroke-width="1.5"/>
<text x="286.5" y="519.8" font-size="8.8" fill="#3568a8" textLength="51.5" lengthAdjust="spacingAndGlyphs" font-family="Liberation Sans">Show legend &#187;</text>
<defs><linearGradient id="bg3" x1="0" y1="0" x2="0" y2="1"><stop offset="0" stop-color="#f9f9f9"/><stop offset="1" stop-color="#e4e4e4"/></linearGradient></defs>
<rect x="570.5" y="506.5" width="165" height="21" fill="url(#bg3)" stroke="#c6c6c6"/>
<text x="653" y="519.8" font-size="8.5" font-weight="bold" fill="#555" text-anchor="middle" font-family="Liberation Sans">Display options</text>
</svg>
</body></html>
